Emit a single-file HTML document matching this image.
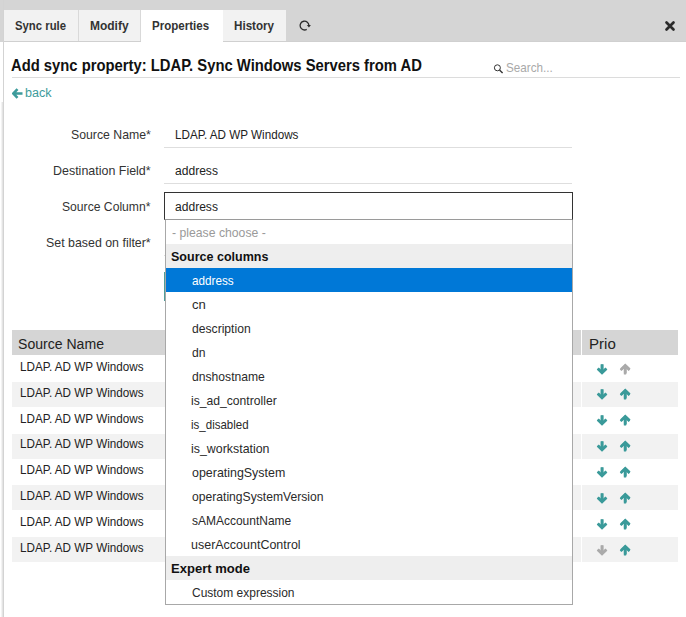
<!DOCTYPE html>
<html><head><meta charset="utf-8">
<style>
*{box-sizing:border-box;margin:0;padding:0}
html,body{width:686px;height:617px;overflow:hidden;background:#fff}
body{position:relative;font-family:"Liberation Sans",sans-serif;color:#222}
.a{position:absolute}
.t{position:absolute;white-space:nowrap;line-height:1.117;transform-origin:0 0}
#bar{left:0;top:0;width:686px;height:42px;background:#d5d5d5}
#barline{left:3px;top:41px;width:683px;height:1px;background:#d0d0d0}
#vline{left:3px;top:0;width:1px;height:617px;background:#d3d3d3}
#vshade{left:1px;top:102px;width:2px;height:515px;background:linear-gradient(to right,#f3f3f3 0 1px,#e4e4e4 1px 2px)}
.tab{top:10px;height:31px;background:#f2f2f2;border-right:1px solid #d9d9d9}
.tab.act{background:#fff;height:32px;border-right:none}
#tline{left:12px;top:77px;width:668px;height:1px;background:#dcdcdc}
.uline{left:164px;width:408px;height:1px;background:#dedede}
#sel{left:164px;top:192px;width:409px;height:28px;border:1px solid #333;border-bottom-color:#9a9a9a}
#dd{left:165px;top:220px;width:408px;height:385px;border:1px solid #a8a8a8;border-top:none;background:#fff}
.opt{position:absolute;left:0;width:406px;height:24px}
.grp{background:#eee}
.hl{background:#0078d7}
#thead{left:12px;top:330px;width:666px;height:25px;background:#d5d5d5}
.row{position:absolute;left:12px;width:666px;height:25.857px}
.alt{background:#f2f2f2}
.gap{position:absolute;left:569px;top:0;width:1px;height:100%;background:#fff}
</style></head><body>
<div class="a" id="bar"></div>
<div class="a" id="barline"></div>
<div class="a" id="vline"></div>
<div class="a" id="vshade"></div>
<div class="a tab" style="left:4px;width:75px"></div>
<div class="a tab" style="left:79px;width:62px"></div>
<div class="a tab act" style="left:141px;width:82px"></div>
<div class="a tab" style="left:223px;width:63px;border-right:none"></div>
<svg class="a" style="left:297.8px;top:18.5px" width="14" height="14" viewBox="0 0 14 14"><path d="M10.9 6.6 A4.4 4.4 0 1 0 8.7 10.4" fill="none" stroke="#2c2c2c" stroke-width="1.3"/><path d="M8.9 6.0 L12.9 6.0 L10.9 8.6 Z" fill="#2c2c2c"/></svg>
<svg class="a" style="left:663.7px;top:19.6px" width="12" height="12" viewBox="0 0 12 12"><path d="M2.5 2.5 L9.5 9.5 M9.5 2.5 L2.5 9.5" stroke="#2a2a2a" stroke-width="2.7" stroke-linecap="round"/></svg>
<div class="a" id="tline"></div>
<svg class="a" style="left:492px;top:63px" width="12" height="11" viewBox="0 0 12 11"><circle cx="5.4" cy="4.8" r="3.0" fill="none" stroke="#333" stroke-width="1.0"/><path d="M7.5 6.9 L10.6 9.9" stroke="#333" stroke-width="1.4"/></svg>
<svg class="a" style="left:12px;top:88px" width="11" height="11" viewBox="0 0 11 11"><path d="M5.5 1.2 L1.3 5.5 L5.5 9.8 M1.8 5.5 H10.5" fill="none" stroke="#3d9b9b" stroke-width="2.6"/></svg>
<div class="a uline" style="top:147px"></div>
<div class="a uline" style="top:183px"></div>
<div class="a" id="sel"></div>
<div class="a" style="left:164px;top:255px;width:1px;height:1px;background:#dedede"></div>
<div class="a" style="left:164px;top:272px;width:1px;height:29px;background:#4f9e9a"></div>
<div class="a" id="thead"></div>
<div class="a" style="left:581px;top:330px;width:1px;height:25px;background:#fff"></div>
<div class="row" style="top:356.200px;height:24.857px"></div>
<div class="row alt" style="top:382.057px;height:24.857px"><div class="gap"></div></div>
<div class="row" style="top:407.914px;height:24.857px"></div>
<div class="row alt" style="top:433.771px;height:24.857px"><div class="gap"></div></div>
<div class="row" style="top:459.628px;height:24.857px"></div>
<div class="row alt" style="top:485.485px;height:24.857px"><div class="gap"></div></div>
<div class="row" style="top:511.342px;height:24.857px"></div>
<div class="row alt" style="top:537.199px;height:24.857px"><div class="gap"></div></div>
<svg class="a" style="left:596px;top:362.50px" width="12" height="13" viewBox="0 0 12 13"><path d="M6.1 1.3 V10" fill="none" stroke="#3b9a98" stroke-width="2.9"/><path d="M1.8 5.4 L6.1 9.5 L10.4 5.4" fill="none" stroke="#3b9a98" stroke-width="2.7"/></svg>
<svg class="a" style="left:619px;top:362.50px" width="12" height="13" viewBox="0 0 12 13"><path d="M6.3 10.5 V3" fill="none" stroke="#aaaaaa" stroke-width="2.9"/><path d="M2.0 6.4 L6.3 2.3 L10.6 6.4" fill="none" stroke="#aaaaaa" stroke-width="2.7"/></svg>
<svg class="a" style="left:596px;top:388.36px" width="12" height="13" viewBox="0 0 12 13"><path d="M6.1 1.3 V10" fill="none" stroke="#3b9a98" stroke-width="2.9"/><path d="M1.8 5.4 L6.1 9.5 L10.4 5.4" fill="none" stroke="#3b9a98" stroke-width="2.7"/></svg>
<svg class="a" style="left:619px;top:388.36px" width="12" height="13" viewBox="0 0 12 13"><path d="M6.3 10.5 V3" fill="none" stroke="#3b9a98" stroke-width="2.9"/><path d="M2.0 6.4 L6.3 2.3 L10.6 6.4" fill="none" stroke="#3b9a98" stroke-width="2.7"/></svg>
<svg class="a" style="left:596px;top:414.21px" width="12" height="13" viewBox="0 0 12 13"><path d="M6.1 1.3 V10" fill="none" stroke="#3b9a98" stroke-width="2.9"/><path d="M1.8 5.4 L6.1 9.5 L10.4 5.4" fill="none" stroke="#3b9a98" stroke-width="2.7"/></svg>
<svg class="a" style="left:619px;top:414.21px" width="12" height="13" viewBox="0 0 12 13"><path d="M6.3 10.5 V3" fill="none" stroke="#3b9a98" stroke-width="2.9"/><path d="M2.0 6.4 L6.3 2.3 L10.6 6.4" fill="none" stroke="#3b9a98" stroke-width="2.7"/></svg>
<svg class="a" style="left:596px;top:440.07px" width="12" height="13" viewBox="0 0 12 13"><path d="M6.1 1.3 V10" fill="none" stroke="#3b9a98" stroke-width="2.9"/><path d="M1.8 5.4 L6.1 9.5 L10.4 5.4" fill="none" stroke="#3b9a98" stroke-width="2.7"/></svg>
<svg class="a" style="left:619px;top:440.07px" width="12" height="13" viewBox="0 0 12 13"><path d="M6.3 10.5 V3" fill="none" stroke="#3b9a98" stroke-width="2.9"/><path d="M2.0 6.4 L6.3 2.3 L10.6 6.4" fill="none" stroke="#3b9a98" stroke-width="2.7"/></svg>
<svg class="a" style="left:596px;top:465.93px" width="12" height="13" viewBox="0 0 12 13"><path d="M6.1 1.3 V10" fill="none" stroke="#3b9a98" stroke-width="2.9"/><path d="M1.8 5.4 L6.1 9.5 L10.4 5.4" fill="none" stroke="#3b9a98" stroke-width="2.7"/></svg>
<svg class="a" style="left:619px;top:465.93px" width="12" height="13" viewBox="0 0 12 13"><path d="M6.3 10.5 V3" fill="none" stroke="#3b9a98" stroke-width="2.9"/><path d="M2.0 6.4 L6.3 2.3 L10.6 6.4" fill="none" stroke="#3b9a98" stroke-width="2.7"/></svg>
<svg class="a" style="left:596px;top:491.79px" width="12" height="13" viewBox="0 0 12 13"><path d="M6.1 1.3 V10" fill="none" stroke="#3b9a98" stroke-width="2.9"/><path d="M1.8 5.4 L6.1 9.5 L10.4 5.4" fill="none" stroke="#3b9a98" stroke-width="2.7"/></svg>
<svg class="a" style="left:619px;top:491.79px" width="12" height="13" viewBox="0 0 12 13"><path d="M6.3 10.5 V3" fill="none" stroke="#3b9a98" stroke-width="2.9"/><path d="M2.0 6.4 L6.3 2.3 L10.6 6.4" fill="none" stroke="#3b9a98" stroke-width="2.7"/></svg>
<svg class="a" style="left:596px;top:517.64px" width="12" height="13" viewBox="0 0 12 13"><path d="M6.1 1.3 V10" fill="none" stroke="#3b9a98" stroke-width="2.9"/><path d="M1.8 5.4 L6.1 9.5 L10.4 5.4" fill="none" stroke="#3b9a98" stroke-width="2.7"/></svg>
<svg class="a" style="left:619px;top:517.64px" width="12" height="13" viewBox="0 0 12 13"><path d="M6.3 10.5 V3" fill="none" stroke="#3b9a98" stroke-width="2.9"/><path d="M2.0 6.4 L6.3 2.3 L10.6 6.4" fill="none" stroke="#3b9a98" stroke-width="2.7"/></svg>
<svg class="a" style="left:596px;top:543.50px" width="12" height="13" viewBox="0 0 12 13"><path d="M6.1 1.3 V10" fill="none" stroke="#aaaaaa" stroke-width="2.9"/><path d="M1.8 5.4 L6.1 9.5 L10.4 5.4" fill="none" stroke="#aaaaaa" stroke-width="2.7"/></svg>
<svg class="a" style="left:619px;top:543.50px" width="12" height="13" viewBox="0 0 12 13"><path d="M6.3 10.5 V3" fill="none" stroke="#3b9a98" stroke-width="2.9"/><path d="M2.0 6.4 L6.3 2.3 L10.6 6.4" fill="none" stroke="#3b9a98" stroke-width="2.7"/></svg>
<svg class="a" style="left:596px;top:363.60px" width="12" height="11" viewBox="0 0 12 11"><path d="M6 0.5 V9 M1.6 4.8 L6 9.2 L10.4 4.8" fill="none" stroke="#3a9a9a" stroke-width="2.3"/></svg>
<svg class="a" style="left:619px;top:363.60px" width="12" height="11" viewBox="0 0 12 11"><path d="M6 10.5 V2 M1.6 6.2 L6 1.8 L10.4 6.2" fill="none" stroke="#aaaaaa" stroke-width="2.3"/></svg>
<svg class="a" style="left:596px;top:389.46px" width="12" height="11" viewBox="0 0 12 11"><path d="M6 0.5 V9 M1.6 4.8 L6 9.2 L10.4 4.8" fill="none" stroke="#3a9a9a" stroke-width="2.3"/></svg>
<svg class="a" style="left:619px;top:389.46px" width="12" height="11" viewBox="0 0 12 11"><path d="M6 10.5 V2 M1.6 6.2 L6 1.8 L10.4 6.2" fill="none" stroke="#3a9a9a" stroke-width="2.3"/></svg>
<svg class="a" style="left:596px;top:415.31px" width="12" height="11" viewBox="0 0 12 11"><path d="M6 0.5 V9 M1.6 4.8 L6 9.2 L10.4 4.8" fill="none" stroke="#3a9a9a" stroke-width="2.3"/></svg>
<svg class="a" style="left:619px;top:415.31px" width="12" height="11" viewBox="0 0 12 11"><path d="M6 10.5 V2 M1.6 6.2 L6 1.8 L10.4 6.2" fill="none" stroke="#3a9a9a" stroke-width="2.3"/></svg>
<svg class="a" style="left:596px;top:441.17px" width="12" height="11" viewBox="0 0 12 11"><path d="M6 0.5 V9 M1.6 4.8 L6 9.2 L10.4 4.8" fill="none" stroke="#3a9a9a" stroke-width="2.3"/></svg>
<svg class="a" style="left:619px;top:441.17px" width="12" height="11" viewBox="0 0 12 11"><path d="M6 10.5 V2 M1.6 6.2 L6 1.8 L10.4 6.2" fill="none" stroke="#3a9a9a" stroke-width="2.3"/></svg>
<svg class="a" style="left:596px;top:467.03px" width="12" height="11" viewBox="0 0 12 11"><path d="M6 0.5 V9 M1.6 4.8 L6 9.2 L10.4 4.8" fill="none" stroke="#3a9a9a" stroke-width="2.3"/></svg>
<svg class="a" style="left:619px;top:467.03px" width="12" height="11" viewBox="0 0 12 11"><path d="M6 10.5 V2 M1.6 6.2 L6 1.8 L10.4 6.2" fill="none" stroke="#3a9a9a" stroke-width="2.3"/></svg>
<svg class="a" style="left:596px;top:492.88px" width="12" height="11" viewBox="0 0 12 11"><path d="M6 0.5 V9 M1.6 4.8 L6 9.2 L10.4 4.8" fill="none" stroke="#3a9a9a" stroke-width="2.3"/></svg>
<svg class="a" style="left:619px;top:492.88px" width="12" height="11" viewBox="0 0 12 11"><path d="M6 10.5 V2 M1.6 6.2 L6 1.8 L10.4 6.2" fill="none" stroke="#3a9a9a" stroke-width="2.3"/></svg>
<svg class="a" style="left:596px;top:518.74px" width="12" height="11" viewBox="0 0 12 11"><path d="M6 0.5 V9 M1.6 4.8 L6 9.2 L10.4 4.8" fill="none" stroke="#3a9a9a" stroke-width="2.3"/></svg>
<svg class="a" style="left:619px;top:518.74px" width="12" height="11" viewBox="0 0 12 11"><path d="M6 10.5 V2 M1.6 6.2 L6 1.8 L10.4 6.2" fill="none" stroke="#3a9a9a" stroke-width="2.3"/></svg>
<svg class="a" style="left:596px;top:544.60px" width="12" height="11" viewBox="0 0 12 11"><path d="M6 0.5 V9 M1.6 4.8 L6 9.2 L10.4 4.8" fill="none" stroke="#aaaaaa" stroke-width="2.3"/></svg>
<svg class="a" style="left:619px;top:544.60px" width="12" height="11" viewBox="0 0 12 11"><path d="M6 10.5 V2 M1.6 6.2 L6 1.8 L10.4 6.2" fill="none" stroke="#3a9a9a" stroke-width="2.3"/></svg>
<div class="t" style="left:14.87px;top:18.90px;font-size:13.37px;font-weight:bold;color:#333;transform:scaleX(0.8487)">Sync rule</div>
<div class="t" style="left:89.75px;top:18.90px;font-size:13.37px;font-weight:bold;color:#333;transform:scaleX(0.8965)">Modify</div>
<div class="t" style="left:152.28px;top:18.90px;font-size:13.37px;font-weight:bold;color:#333;transform:scaleX(0.8643)">Properties</div>
<div class="t" style="left:234.45px;top:18.90px;font-size:13.37px;font-weight:bold;color:#333;transform:scaleX(0.8704)">History</div>
<div class="t" style="left:10.92px;top:56.74px;font-size:16.86px;font-weight:bold;color:#111;transform:scaleX(0.8775)">Add sync property: LDAP. Sync Windows Servers from AD</div>
<div class="t" style="left:25.28px;top:87.14px;font-size:12px;font-weight:normal;color:#3d9b9b;transform:scaleX(1.0458)">back</div>
<div class="t" style="left:506.03px;top:61.82px;font-size:12.35px;font-weight:normal;color:#a9a9a9;transform:scaleX(0.9456)">Search...</div>
<div class="t" style="left:70.52px;top:128.29px;font-size:12.94px;font-weight:normal;color:#333;transform:scaleX(0.9484)">Source Name*</div>
<div class="t" style="left:52.55px;top:164.29px;font-size:12.94px;font-weight:normal;color:#333;transform:scaleX(0.9629)">Destination Field*</div>
<div class="t" style="left:61.93px;top:200.29px;font-size:12.94px;font-weight:normal;color:#333;transform:scaleX(0.9388)">Source Column*</div>
<div class="t" style="left:45.53px;top:236.29px;font-size:12.94px;font-weight:normal;color:#333;transform:scaleX(0.9575)">Set based on filter*</div>
<div class="t" style="left:175.05px;top:127.55px;font-size:12.65px;font-weight:normal;color:#222;transform:scaleX(0.9230)">LDAP. AD WP Windows</div>
<div class="t" style="left:175.06px;top:163.55px;font-size:12.65px;font-weight:normal;color:#222;transform:scaleX(0.9549)">address</div>
<div class="t" style="left:175.06px;top:199.55px;font-size:12.65px;font-weight:normal;color:#222;transform:scaleX(0.9549)">address</div>
<div class="t" style="left:18.13px;top:335.98px;font-size:14.39px;font-weight:normal;color:#222;transform:scaleX(0.9780)">Source Name</div>
<div class="t" style="left:589.38px;top:335.98px;font-size:14.39px;font-weight:normal;color:#222;transform:scaleX(1.0477)">Prio</div>
<div class="t" style="left:19.65px;top:359.55px;font-size:12.65px;font-weight:normal;color:#222;transform:scaleX(0.9235)">LDAP. AD WP Windows</div>
<div class="t" style="left:19.65px;top:385.55px;font-size:12.65px;font-weight:normal;color:#222;transform:scaleX(0.9235)">LDAP. AD WP Windows</div>
<div class="t" style="left:19.65px;top:411.55px;font-size:12.65px;font-weight:normal;color:#222;transform:scaleX(0.9235)">LDAP. AD WP Windows</div>
<div class="t" style="left:19.65px;top:436.55px;font-size:12.65px;font-weight:normal;color:#222;transform:scaleX(0.9235)">LDAP. AD WP Windows</div>
<div class="t" style="left:19.65px;top:462.55px;font-size:12.65px;font-weight:normal;color:#222;transform:scaleX(0.9235)">LDAP. AD WP Windows</div>
<div class="t" style="left:19.65px;top:488.55px;font-size:12.65px;font-weight:normal;color:#222;transform:scaleX(0.9235)">LDAP. AD WP Windows</div>
<div class="t" style="left:19.65px;top:514.55px;font-size:12.65px;font-weight:normal;color:#222;transform:scaleX(0.9235)">LDAP. AD WP Windows</div>
<div class="t" style="left:19.65px;top:540.55px;font-size:12.65px;font-weight:normal;color:#222;transform:scaleX(0.9235)">LDAP. AD WP Windows</div>
<div class="a" id="dd">
<div class="opt grp" style="top:24px"></div>
<div class="opt hl" style="top:48px"></div>
<div class="opt grp" style="top:336px"></div>
</div>
<div class="t" style="left:171.66px;top:225.60px;font-size:12.6px;font-weight:normal;color:#9a9a9a;transform:scaleX(0.9709)">- please choose -</div>
<div class="t" style="left:170.71px;top:249.60px;font-size:12.6px;font-weight:bold;color:#111;transform:scaleX(0.9940)">Source columns</div>
<div class="t" style="left:192.29px;top:273.60px;font-size:12.6px;font-weight:normal;color:#fff;transform:scaleX(0.9285)">address</div>
<div class="t" style="left:191.52px;top:297.60px;font-size:12.6px;font-weight:normal;color:#2a2a2a;transform:scaleX(1.0386)">cn</div>
<div class="t" style="left:191.56px;top:321.60px;font-size:12.6px;font-weight:normal;color:#2a2a2a;transform:scaleX(0.9636)">description</div>
<div class="t" style="left:191.56px;top:345.60px;font-size:12.6px;font-weight:normal;color:#2a2a2a;transform:scaleX(0.9636)">dn</div>
<div class="t" style="left:191.56px;top:369.60px;font-size:12.6px;font-weight:normal;color:#2a2a2a;transform:scaleX(0.9636)">dnshostname</div>
<div class="t" style="left:191.30px;top:393.60px;font-size:12.6px;font-weight:normal;color:#2a2a2a;transform:scaleX(0.9636)">is_ad_controller</div>
<div class="t" style="left:191.32px;top:417.60px;font-size:12.6px;font-weight:normal;color:#2a2a2a;transform:scaleX(0.9145)">is_disabled</div>
<div class="t" style="left:191.29px;top:441.60px;font-size:12.6px;font-weight:normal;color:#2a2a2a;transform:scaleX(0.9838)">is_workstation</div>
<div class="t" style="left:191.54px;top:465.60px;font-size:12.6px;font-weight:normal;color:#2a2a2a;transform:scaleX(0.9869)">operatingSystem</div>
<div class="t" style="left:191.56px;top:489.60px;font-size:12.6px;font-weight:normal;color:#2a2a2a;transform:scaleX(0.9636)">operatingSystemVersion</div>
<div class="t" style="left:191.55px;top:513.60px;font-size:12.6px;font-weight:normal;color:#2a2a2a;transform:scaleX(0.9518)">sAMAccountName</div>
<div class="t" style="left:191.31px;top:537.60px;font-size:12.6px;font-weight:normal;color:#2a2a2a;transform:scaleX(0.9913)">userAccountControl</div>
<div class="t" style="left:171.27px;top:561.60px;font-size:12.6px;font-weight:bold;color:#111;transform:scaleX(1.0356)">Expert mode</div>
<div class="t" style="left:191.80px;top:585.60px;font-size:12.6px;font-weight:normal;color:#2a2a2a;transform:scaleX(0.9509)">Custom expression</div>
</body></html>
